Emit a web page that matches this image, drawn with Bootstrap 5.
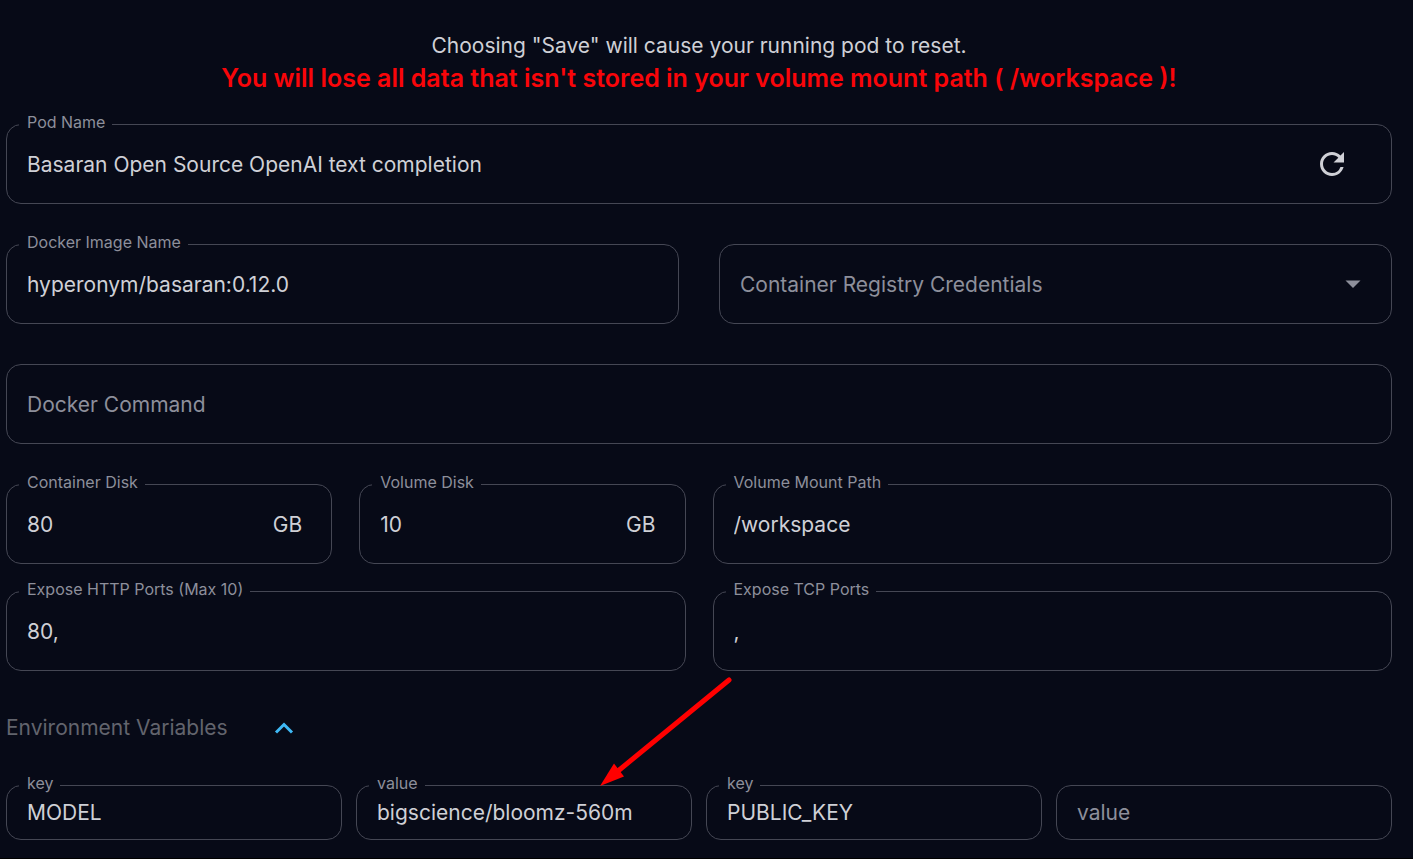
<!DOCTYPE html>
<html lang="en">
<head>
<meta charset="utf-8">
<meta name="viewport" content="width=device-width, initial-scale=1">
<title>Edit Pod</title>
<link href="https://cdn.jsdelivr.net/npm/bootstrap@5.3.0/dist/css/bootstrap.min.css" rel="stylesheet">
<style>
  :root { --page: #070a17; --line: #454754; --ink: #cfd0d6; --muted: #8d8f9b; }
  body { background: var(--page); color: var(--ink); font-family: Inter, "Liberation Sans", sans-serif; font-size: 21px; line-height: 33px; }
  .pod-form { padding: 29px 21px 18px 6px; border-bottom: 1px solid #000; }
  .notice { margin-bottom: 29px; }
  .warning { color: #f90509; font-size: 25px; font-weight: 600; }
  .gut-40 { --bs-gutter-x: 40px; }
  .gut-27 { --bs-gutter-x: 27px; }
  .gut-14 { --bs-gutter-x: 14px; }
  .gap-below { margin-bottom: 40px; }
  .gap-below-sm { margin-bottom: 27px; }
  .outlined { position: relative; display: flex; align-items: center; height: 80px; padding: 0 29px 0 20px; border: 1px solid var(--line); border-radius: 15px; }
  .outlined.short { height: 55px; padding-right: 20px; }
  .outlined > label { position: absolute; top: -15px; left: 12px; padding: 0 7px 0 8px; background: var(--page); color: var(--muted); font-size: 16px; line-height: 24px; white-space: nowrap; }
  .outlined input, .outlined select { flex: 1; min-width: 0; width: 100%; padding: 0; border: 0; outline: 0; background: none; color: var(--ink); font: inherit; appearance: none; }
  .outlined select { color: var(--muted); }
  .outlined input::placeholder { color: var(--muted); opacity: 1; }
  .outlined:focus-within { border-color: #3fb9f5; }
  .icon-btn { padding: 0; border: 0; background: none; color: inherit; line-height: 0; }
  .reset { margin-right: 12px; }
  .env-head { margin: 40px 0 41px; gap: 40px; color: #62646d; }
  .env-head .icon-btn { color: #3fb9f5; }
  .pointer { position: absolute; right: -42px; bottom: 100%; pointer-events: none; z-index: 2; }
</style>
</head>
<body>
<form class="pod-form">
  <div class="notice text-center">
    <div>Choosing "Save" will cause your running pod to reset.</div>
    <div class="warning">You will lose all data that isn't stored in your volume mount path ( /workspace )!</div>
  </div>

  <div class="outlined gap-below">
    <label for="podName">Pod Name</label>
    <input id="podName" type="text" value="Basaran Open Source OpenAI text completion">
    <button class="icon-btn reset" type="button" aria-label="Reset name">
      <svg width="36" height="36" viewBox="0 0 24 24" fill="currentColor"><path d="M17.65 6.35A7.958 7.958 0 0 0 12 4c-4.42 0-7.99 3.58-7.99 8s3.57 8 7.99 8c3.73 0 6.84-2.55 7.73-6h-2.08A5.99 5.99 0 0 1 12 18c-3.31 0-6-2.69-6-6s2.69-6 6-6c1.66 0 3.14.69 4.22 1.78L13 11h7V4l-2.35 2.35z"/></svg>
    </button>
  </div>

  <div class="row gut-40 gap-below">
    <div class="col-6">
      <div class="outlined">
        <label for="image">Docker Image Name</label>
        <input id="image" type="text" value="hyperonym/basaran:0.12.0">
      </div>
    </div>
    <div class="col-6">
      <div class="outlined">
        <select id="creds" aria-label="Container Registry Credentials"><option>Container Registry Credentials</option></select>
        <svg width="18" height="8" viewBox="0 0 18 8" fill="#8d8f9b"><path d="M1.500 .5h15L9 8z"/></svg>
      </div>
    </div>
  </div>

  <div class="outlined gap-below">
    <input id="command" type="text" placeholder="Docker Command" aria-label="Docker Command">
  </div>

  <div class="row gut-27 gap-below-sm">
    <div class="col-6">
      <div class="row gut-27">
        <div class="col-6">
          <div class="outlined">
            <label for="cdisk">Container Disk</label>
            <input id="cdisk" type="text" inputmode="numeric" value="80">
            <span>GB</span>
          </div>
        </div>
        <div class="col-6">
          <div class="outlined">
            <label for="vdisk">Volume Disk</label>
            <input id="vdisk" type="text" inputmode="numeric" value="10">
            <span>GB</span>
          </div>
        </div>
      </div>
    </div>
    <div class="col-6">
      <div class="outlined">
        <label for="mount">Volume Mount Path</label>
        <input id="mount" type="text" value="/workspace">
      </div>
    </div>
  </div>

  <div class="row gut-27">
    <div class="col-6">
      <div class="outlined">
        <label for="http">Expose HTTP Ports (Max 10)</label>
        <input id="http" type="text" value="80,">
      </div>
    </div>
    <div class="col-6">
      <div class="outlined">
        <label for="tcp">Expose TCP Ports</label>
        <input id="tcp" type="text" value=",">
      </div>
    </div>
  </div>

  <div class="env-head d-flex align-items-center">
    <span>Environment Variables</span>
    <button class="icon-btn" type="button" aria-label="Collapse environment variables" aria-expanded="true">
      <svg width="32" height="32" viewBox="0 0 32 32" fill="none" stroke="currentColor" stroke-width="3"><path d="M8 20.500l8-8 8 8"/></svg>
    </button>
  </div>

  <div class="row gut-14">
    <div class="col-3">
      <div class="outlined short">
        <label for="key1">key</label>
        <input id="key1" type="text" value="MODEL">
      </div>
    </div>
    <div class="col-3">
      <div class="outlined short">
        <label for="val1">value</label>
        <input id="val1" type="text" value="bigscience/bloomz-560m">
        <svg class="pointer" width="133" height="109" viewBox="0 0 133 109"><path d="M129 3L18 94" stroke="red" stroke-width="5" stroke-linecap="round"/><path d="M0 109L14 86.500L24 99.500z" fill="red"/></svg>
      </div>
    </div>
    <div class="col-3">
      <div class="outlined short">
        <label for="key2">key</label>
        <input id="key2" type="text" value="PUBLIC_KEY">
      </div>
    </div>
    <div class="col-3">
      <div class="outlined short">
        <input id="val2" type="text" placeholder="value" aria-label="value">
      </div>
    </div>
  </div>
</form>
<script src="https://cdn.jsdelivr.net/npm/bootstrap@5.3.0/dist/js/bootstrap.bundle.min.js"></script>
</body>
</html>
